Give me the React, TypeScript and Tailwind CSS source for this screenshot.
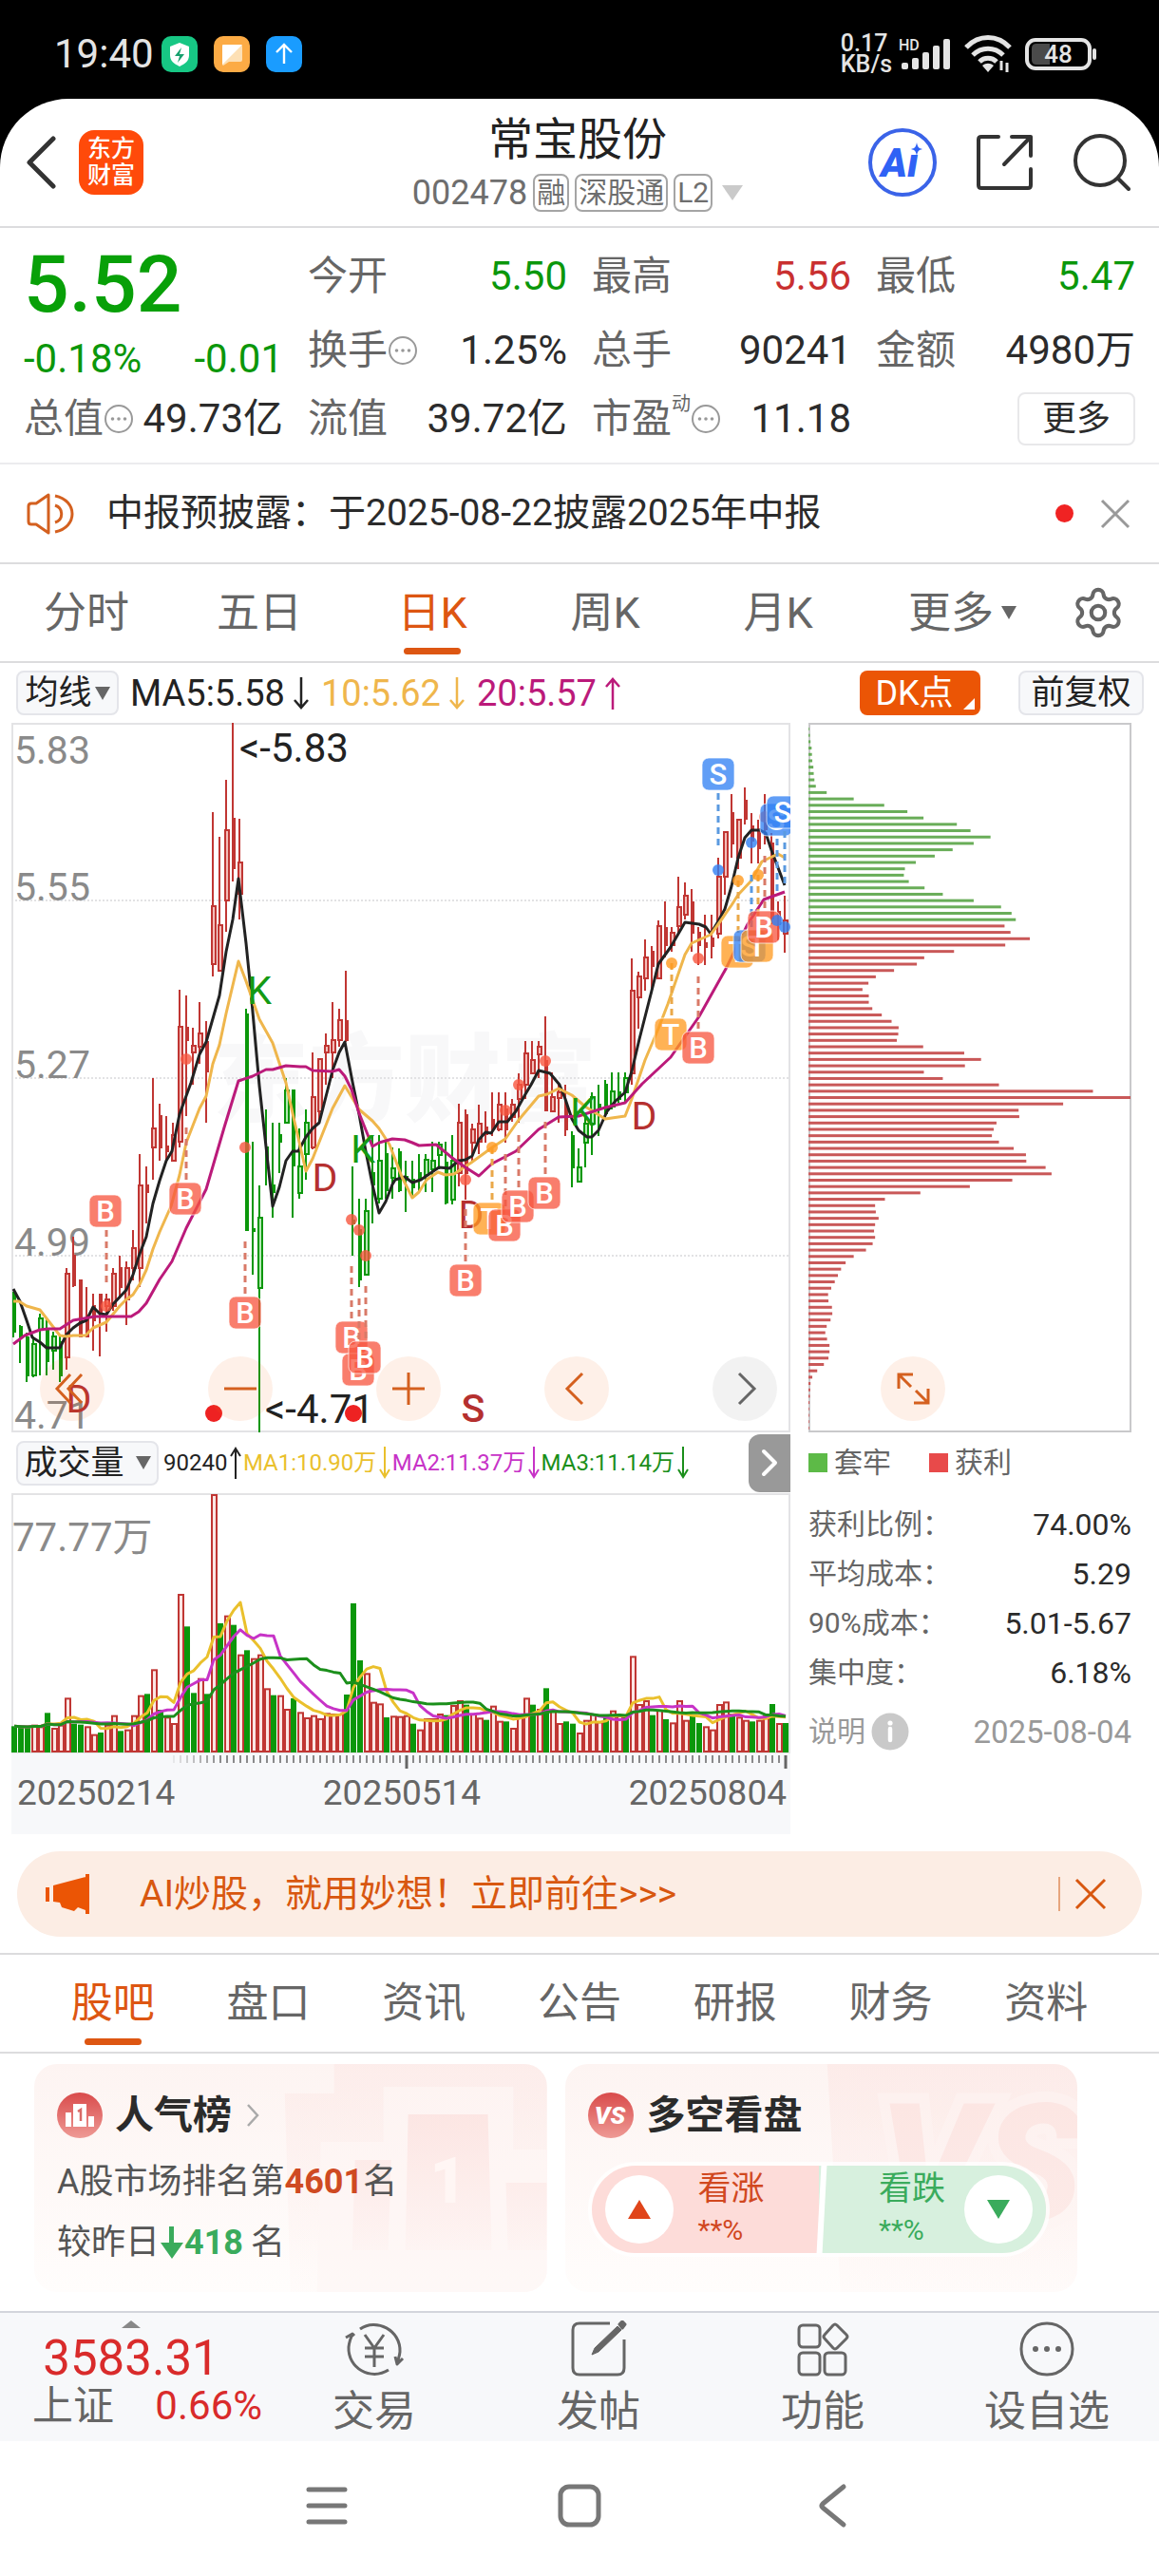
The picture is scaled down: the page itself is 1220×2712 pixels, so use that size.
import React from "react";
import { Settings } from "lucide-react";

type Kind = "r" | "R" | "g" | "G";
type Candle = [number, number, number, number, Kind];

const RED = "#c03633";
const GREEN = "#0b970b";

/* high, body top, body bottom, low, kind (lower case: hollow body) */
const CANDLES: Candle[] = [
  [599, 601, 641, 647, "G"], [634, 636, 646, 674, "G"], [642, 647, 687, 694, "G"], [646, 654, 687, 689, "g"],
  [622, 627, 639, 687, "g"], [627, 639, 672, 687, "G"], [641, 646, 661, 681, "g"], [646, 652, 687, 694, "G"],
  [574, 580, 668, 681, "r"], [541, 561, 592, 594, "R"], [587, 587, 646, 647, "R"], [594, 626, 646, 647, "R"],
  [601, 614, 629, 661, "R"], [601, 602, 621, 667, "R"], [601, 607, 614, 641, "r"], [574, 580, 614, 619, "r"],
  [561, 574, 594, 606, "R"], [567, 574, 607, 634, "r"], [534, 553, 574, 587, "r"], [454, 487, 574, 594, "r"],
  [467, 487, 494, 527, "R"], [374, 427, 447, 481, "r"], [401, 414, 447, 461, "R"], [414, 446, 451, 462, "R"],
  [421, 434, 461, 462, "r"], [281, 320, 441, 447, "r"], [287, 321, 334, 414, "R"], [321, 340, 347, 381, "r"],
  [294, 327, 341, 359, "r"], [314, 336, 367, 421, "R"], [94, 193, 254, 267, "r"], [120, 213, 261, 262, "r"],
  [60, 113, 187, 220, "r"], [0, 101, 153, 167, "R"], [101, 147, 180, 207, "r"], [301, 307, 534, 535, "G"],
  [441, 533, 535, 581, "G"], [487, 521, 595, 747, "g"], [407, 447, 459, 487, "G"], [421, 487, 494, 521, "G"],
  [421, 434, 441, 474, "G"], [374, 387, 421, 422, "g"], [387, 387, 466, 521, "G"], [427, 467, 495, 501, "g"],
  [407, 421, 454, 481, "g"], [347, 394, 447, 449, "r"], [353, 354, 409, 422, "r"], [327, 340, 347, 381, "r"],
  [294, 334, 347, 374, "r"], [301, 313, 334, 341, "r"], [261, 314, 334, 336, "R"], [467, 524, 527, 561, "G"],
  [501, 534, 586, 594, "G"], [501, 514, 581, 582, "g"], [434, 474, 486, 527, "G"], [434, 461, 501, 506, "g"],
  [441, 454, 492, 501, "G"], [447, 469, 479, 501, "g"], [448, 452, 492, 494, "G"], [461, 478, 481, 515, "G"],
  [461, 481, 489, 500, "G"], [454, 474, 481, 494, "G"], [454, 460, 476, 494, "g"], [441, 461, 470, 494, "g"],
  [441, 444, 455, 470, "g"], [441, 463, 505, 507, "G"], [434, 461, 502, 507, "g"], [401, 421, 474, 488, "r"],
  [407, 413, 474, 502, "R"], [422, 428, 442, 461, "r"], [402, 422, 441, 454, "r"], [409, 426, 433, 442, "R"],
  [389, 418, 426, 435, "R"], [389, 402, 428, 430, "r"], [389, 407, 428, 442, "R"], [396, 402, 415, 420, "r"],
  [369, 381, 396, 421, "r"], [335, 348, 381, 396, "r"], [335, 355, 369, 370, "r"], [335, 341, 349, 374, "r"],
  [309, 356, 408, 409, "R"], [368, 394, 409, 410, "r"], [381, 389, 395, 421, "r"], [381, 404, 428, 435, "R"],
  [430, 435, 468, 489, "G"], [448, 468, 483, 484, "g"], [415, 422, 442, 468, "g"], [389, 394, 422, 455, "g"],
  [381, 402, 405, 435, "G"], [376, 381, 411, 415, "G"], [368, 388, 404, 407, "g"], [368, 389, 396, 400, "G"],
  [368, 374, 389, 401, "g"], [248, 282, 369, 381, "r"], [262, 267, 289, 322, "r"], [228, 247, 269, 282, "r"],
  [235, 241, 256, 282, "R"], [208, 214, 269, 270, "r"], [188, 216, 234, 247, "R"], [215, 221, 234, 241, "r"],
  [162, 194, 214, 222, "r"], [168, 182, 202, 207, "r"], [175, 189, 221, 241, "R"], [215, 221, 234, 255, "R"],
  [202, 232, 236, 255, "R"], [202, 227, 235, 248, "R"], [142, 162, 222, 227, "r"], [114, 115, 162, 181, "r"],
  [75, 95, 127, 142, "R"], [101, 102, 142, 154, "r"], [68, 82, 101, 107, "R"], [95, 109, 124, 148, "R"],
  [102, 112, 132, 148, "R"], [75, 99, 112, 128, "R"], [116, 127, 206, 212, "R"], [188, 199, 212, 229, "R"],
  [182, 208, 222, 242, "r"],
];

const MA5 =
  "2,596 9,609 16,629 22,647 30,652 37,658 51,658 58,644 65,637 72,632 79,629 86,615 93,622 100,623 107,612 121,597 128,581 135,559 142,541 149,506 156,482 163,461 169,451 177,412 189,379 198,349 205,336 219,287 226,241 233,207 239,164 247,232 252,282 261,382 268,446 275,509 282,489 289,461 296,451 302,451 310,436 317,427 324,421 334,382 338,366 345,347 351,336 359,378 366,412 373,451 380,486 387,516 394,504 401,486 404,481 414,478 422,484 431,481 450,468 461,469 471,461 478,460 485,456 492,439 499,431 505,432 513,420 522,420 531,409 541,391 547,381 555,366 567,369 577,381 583,396 590,417 597,429 606,436 611,436 618,429 627,409 636,398 646,389 653,367 661,333 674,282 681,254 694,236 709,210 724,212 731,215 736,222 744,209 751,196 758,172 765,142 772,121 779,113 788,113 794,116 800,134 814,171";
const MA10 =
  "2,609 8,609 16,614 30,618 37,627 51,645 58,646 65,645 78,645 86,637 100,631 114,614 121,607 128,602 135,591 142,576 149,554 156,536 168,509 177,476 184,442 198,406 205,393 212,359 219,339 226,306 239,251 247,272 261,312 275,337 289,379 296,411 310,472 317,459 338,406 351,382 366,407 380,419 387,427 398,444 411,478 422,500 429,494 437,481 449,473 457,476 466,475 484,463 506,447 520,438 534,418 555,393 564,391 576,385 590,392 604,404 625,417 646,414 653,396 667,355 681,322 691,296 709,244 716,232 736,223 744,212 758,192 765,181 779,166 790,146 807,138 814,142";
const MA20 =
  "2,654 14,645 30,639 38,638 51,638 65,629 88,625 126,625 134,620 142,611 156,586 169,567 184,532 205,491 224,426 239,377 254,372 268,365 275,365 289,361 304,362 310,362 317,366 338,367 345,365 351,372 358,386 366,411 380,446 387,442 401,438 414,439 422,442 429,445 447,444 464,458 478,468 492,477 506,464 531,451 555,428 576,415 597,414 625,405 646,400 664,380 694,352 724,309 752,259 775,212 792,186 814,178";

type Marker = { t: "B" | "T" | "S"; x: number; y: number; dx: number; dy: number };
const MARKERS: Marker[] = [
  { t: "B", x: 99, y: 514, dx: 100, dy: 614 },
  { t: "B", x: 183, y: 501, dx: 184, dy: 354 },
  { t: "B", x: 246, y: 621, dx: 246, dy: 447 },
  { t: "B", x: 358, y: 647, dx: 358, dy: 523 },
  { t: "B", x: 365, y: 681, dx: 366, dy: 534 },
  { t: "B", x: 372, y: 668, dx: 373, dy: 561 },
  { t: "B", x: 478, y: 587, dx: 478, dy: 481 },
  { t: "T", x: 503, y: 522, dx: 506, dy: 447 },
  { t: "B", x: 519, y: 529, dx: 520, dy: 408 },
  { t: "B", x: 533, y: 509, dx: 534, dy: 381 },
  { t: "B", x: 561, y: 495, dx: 562, dy: 356 },
  { t: "T", x: 694, y: 328, dx: 695, dy: 253 },
  { t: "B", x: 723, y: 342, dx: 723, dy: 248 },
  { t: "S", x: 744, y: 54, dx: 744, dy: 155 },
  { t: "T", x: 764, y: 241, dx: 765, dy: 166 },
  { t: "S", x: 777, y: 235, dx: 779, dy: 126 },
  { t: "T", x: 785, y: 235, dx: 786, dy: 160 },
  { t: "B", x: 792, y: 215, dx: 793, dy: 99 },
  { t: "S", x: 805, y: 102, dx: 806, dy: 208 },
  { t: "S", x: 812, y: 94, dx: 814, dy: 215 },
];
const MARK_FILL = { B: "#f7563f", T: "#ff9a1f", S: "#2f80f3" };
const MARK_DASH = { B: "#d97a68", T: "#eaa849", S: "#5b9ae0" };

const VOLUMES: [number, "r" | "G"][] = [
  [80, "G"], [78, "G"], [75, "G"], [85, "r"], [80, "r"], [122, "G"], [75, "r"], [85, "r"], [170, "r"], [88, "G"],
  [85, "G"], [80, "r"], [55, "r"], [60, "G"], [85, "r"], [115, "r"], [65, "G"], [70, "r"], [115, "r"], [178, "r"],
  [182, "G"], [260, "r"], [132, "G"], [110, "r"], [90, "r"], [498, "r"], [395, "G"], [185, "G"], [232, "r"], [182, "G"],
  [813, "r"], [405, "G"], [430, "r"], [400, "G"], [307, "r"], [320, "G"], [295, "r"], [307, "r"], [200, "r"], [178, "G"],
  [178, "r"], [135, "r"], [168, "G"], [125, "r"], [108, "r"], [115, "r"], [105, "r"], [122, "r"], [120, "r"], [120, "r"],
  [180, "G"], [468, "G"], [288, "G"], [248, "r"], [157, "r"], [152, "r"], [108, "G"], [113, "r"], [112, "r"], [115, "r"],
  [88, "G"], [70, "r"], [105, "r"], [105, "r"], [120, "r"], [115, "G"], [147, "r"], [162, "r"], [148, "G"], [120, "r"],
  [107, "r"], [100, "G"], [145, "r"], [97, "r"], [95, "G"], [75, "r"], [115, "r"], [170, "r"], [148, "G"], [135, "r"],
  [200, "G"], [132, "r"], [90, "r"], [95, "G"], [88, "G"], [60, "r"], [100, "r"], [120, "r"], [95, "r"], [110, "G"],
  [130, "r"], [115, "r"], [110, "G"], [302, "r"], [150, "r"], [162, "r"], [115, "G"], [132, "r"], [102, "G"], [92, "r"],
  [162, "r"], [100, "r"], [115, "G"], [90, "G"], [80, "r"], [70, "r"], [150, "r"], [158, "r"], [120, "G"], [110, "r"],
  [100, "r"], [95, "G"], [100, "r"], [115, "r"], [150, "G"], [90, "r"], [90, "G"],
];

const CHIPS_TRAPPED = [
  2, 4, 6, 9, 10, 11, 14, 15, 17, 21, 52, 129, 216, 282, 328, 423, 462, 519, 471, 411, 360, 306, 275, 272, 286, 331,
  383, 471, 549, 579, 591,
];
const CHIPS_PROFIT = [
  559, 576, 631, 561, 415, 330, 309, 244, 192, 171, 154, 172, 172, 182, 209, 237, 257, 256, 252, 327, 444, 492, 446,
  329, 383, 543, 811, 918, 726, 599, 601, 536, 528, 523, 543, 585, 620, 621, 676, 693, 581, 460, 319, 218, 190, 192,
  200, 190, 187, 190, 183, 164, 129, 106, 93, 84, 75, 65, 56, 57, 67, 68, 63, 52, 48, 53, 60, 60, 57, 44, 25, 11, 6, 5,
  4, 3, 2, 2, 2, 2,
];

const barX = (i: number) => 3 + i * 7;

function average(days: number) {
  return VOLUMES.map((_, i) => {
    const part = VOLUMES.slice(Math.max(0, i - days + 1), i + 1);
    const mean = part.reduce((s, v) => s + v[0], 0) / part.length;
    return `${barX(i)},${(272 - mean / 3).toFixed(1)}`;
  }).join(" ");
}

function PriceChart() {
  return (
    <svg viewBox="0 0 820 747" className="block h-auto w-full" role="img" aria-label="日K线图">
      <rect x="1" y="1" width="818" height="745" fill="#fff" stroke="#e3e3e5" strokeWidth="2" />
      <text x="212" y="412" fontSize="101" fontWeight="900" fill="#f8f8f9">东方财富</text>
      {[187, 374, 561].map((y) => (
        <line key={y} x1="0" x2="820" y1={y} y2={y} stroke="#e2e2e4" strokeWidth="2" strokeDasharray="2 2" />
      ))}
      <g fontSize="41" fill="#8a8a8a">
        <text x="3" y="43">5.83</text>
        <text x="3" y="187">5.55</text>
        <text x="3" y="374">5.27</text>
        <text x="3" y="561">4.99</text>
        <text x="3" y="743">4.71</text>
      </g>
      {CANDLES.map(([hi, top, bot, lo, k], i) => {
        const x = barX(i);
        const c = k === "r" || k === "R" ? RED : GREEN;
        const hollow = k === "r" || k === "g";
        return (
          <g key={i} stroke={c} strokeWidth="2">
            <line x1={x - 1} x2={x - 1} y1={hi} y2={hollow ? top : lo} />
            {hollow && <line x1={x - 1} x2={x - 1} y1={bot} y2={lo} />}
            {hollow ? (
              <rect x={x - 2} y={top} width="4" height={Math.max(2, bot - top)} fill={k === "r" ? "#f3bdb9" : "#b5eab5"} />
            ) : (
              <rect x={x - 1} y={top} width="2" height={Math.max(2, bot - top)} fill={c} />
            )}
          </g>
        );
      })}
      <g fill="none" strokeWidth="3" strokeLinejoin="round">
        <polyline points={MA5} stroke="#222" />
        <polyline points={MA10} stroke="#efb64c" />
        <polyline points={MA20} stroke="#bb1a7a" />
      </g>
      <g fontSize="42" fill="#222">
        <text x="240" y="41">&lt;-5.83</text>
        <text x="267" y="737">&lt;-4.71</text>
      </g>
      <g fontSize="41" textAnchor="middle">
        <g fill="#149a14">
          <text x="261" y="296">K</text>
          <text x="370" y="463">K</text>
          <text x="601" y="424">K</text>
        </g>
        <g fill="#b5302f">
          <text x="330" y="493">D</text>
          <text x="71" y="726">D</text>
          <text x="484" y="532">D</text>
          <text x="666" y="428">D</text>
          <text x="486" y="736" fontWeight="500">S</text>
        </g>
      </g>
      <circle cx="213" cy="727" r="9" fill="#ee2222" />
      <circle cx="360" cy="727" r="9" fill="#ee2222" />
      {MARKERS.map((m, i) => {
        const dir = m.dy > m.y ? 1 : -1;
        const start = m.y + dir * 20;
        const end = m.t === "T" ? m.dy : start + dir * 56;
        return (
          <g key={i}>
            <line x1={m.dx} x2={m.dx} y1={start} y2={end} stroke={MARK_DASH[m.t]} strokeWidth="3" strokeDasharray="7 5" />
            <circle cx={m.dx} cy={m.dy} r="6" fill={MARK_FILL[m.t]} fillOpacity="0.8" />
            <rect x={m.x - 17} y={m.y - 17} width="34" height="34" rx="7" fill={MARK_FILL[m.t]} fillOpacity="0.76" stroke="#fff" strokeOpacity="0.7" strokeWidth="1" />
            <text x={m.x} y={m.y + 11} textAnchor="middle" fontSize="31" fontWeight="500" fill="#fff">{m.t}</text>
          </g>
        );
      })}
    </svg>
  );
}

function VolumeChart() {
  return (
    <svg viewBox="0 0 820 274" className="block h-auto w-full" role="img" aria-label="成交量图">
      <rect x="1" y="1" width="818" height="272" fill="#fff" stroke="#e3e3e5" strokeWidth="2" />
      {VOLUMES.map(([v, k], i) => {
        const h = v / 3;
        return k === "r" ? (
          <rect key={i} x={barX(i) - 2} y={273 - h} width="5" height={h - 1} fill="#fbe6e4" stroke={RED} strokeWidth="2" />
        ) : (
          <rect key={i} x={barX(i) - 3} y={272 - h} width="6" height={h + 1} fill={GREEN} />
        );
      })}
      <g fill="none" strokeWidth="3" strokeLinejoin="round">
        <polyline points={average(5)} stroke="#eac02c" />
        <polyline points={average(10)} stroke="#c733c7" />
        <polyline points={average(20)} stroke="#1b8f1b" />
      </g>
      <text x="1" y="61" fontSize="42" fill="#8a8a8a">77.77万</text>
    </svg>
  );
}

function ChipChart() {
  return (
    <svg viewBox="0 0 340 747" className="block h-auto w-full" role="img" aria-label="筹码分布">
      <rect x="1" y="1" width="338" height="745" fill="#fff" stroke="#c9c9cb" strokeWidth="2" />
      {[...CHIPS_TRAPPED, ...CHIPS_PROFIT].map((v, i) => (
        <rect key={i} x="0" y={5 + i * 6.69} width={(v / 918) * 339} height="3" fill={i < CHIPS_TRAPPED.length ? "#69ad58" : "#c95858"} />
      ))}
    </svg>
  );
}

function RoundButton({ label, gray, children }: { label: string; gray?: boolean; children: React.ReactNode }) {
  return (
    <button
      type="button"
      aria-label={label}
      className={`flex size-[68px] items-center justify-center rounded-full ${gray ? "bg-black/5 text-[#666]" : "bg-[#f76b1c]/10 text-[#d4601f]"}`}
    >
      <svg viewBox="0 0 40 40" className="size-10" fill="none" stroke="currentColor" strokeWidth="3">
        {children}
      </svg>
    </button>
  );
}

function Dots() {
  return (
    <svg viewBox="0 0 32 32" className="size-8 shrink-0" fill="none" stroke="#999" strokeWidth="2">
      <circle cx="16" cy="16" r="14" />
      <g fill="#999" stroke="none">
        <circle cx="9.5" cy="16" r="1.8" />
        <circle cx="16" cy="16" r="1.8" />
        <circle cx="22.5" cy="16" r="1.8" />
      </g>
    </svg>
  );
}

function Stat({ label, value, tone = "text-[#2b2b2b]", dots, sup }: { label: string; value: string; tone?: string; dots?: boolean; sup?: string }) {
  return (
    <div className="flex h-[75px] items-center justify-between whitespace-nowrap">
      <dt className="flex items-center text-[#666]">
        {label}
        {sup && <span className="-mt-8 text-xl leading-5">{sup}</span>}
        {dots && <Dots />}
      </dt>
      <dd className={tone}>{value}</dd>
    </div>
  );
}

function Arrow({ up }: { up?: boolean }) {
  return (
    <svg viewBox="0 0 18 34" className="h-[34px] w-[18px]" fill="none" stroke="currentColor" strokeWidth="2.5">
      {up ? <path d="M9 34V2M2 10l7-8 7 8" /> : <path d="M9 0v32M2 24l7 8 7-8" />}
    </svg>
  );
}

function SmallArrow({ up }: { up?: boolean }) {
  return (
    <svg viewBox="0 0 14 34" className="h-[34px] w-[14px]" fill="none" stroke="currentColor" strokeWidth="2">
      {up ? <path d="M7 34V2M2 10l5-8 5 8" /> : <path d="M7 0v32M2 24l5 8 5-8" />}
    </svg>
  );
}

function Triangle() {
  return (
    <svg viewBox="0 0 16 14" className="h-[14px] w-4 shrink-0">
      <path d="M0 0h16L8 14z" fill="#666" />
    </svg>
  );
}

function StatusBar() {
  return (
    <div className="flex h-[104px] items-center justify-between pt-[10px] pr-[65px] pl-[57px] text-[#e4e4e4]">
      <div className="flex items-center">
        <span className="text-[42px] leading-none">19:40</span>
        <svg viewBox="0 0 38 38" className="ml-2 size-[38px]">
          <rect width="38" height="38" rx="10" fill="#17c784" />
          <path d="M19 7l10 4v9c0 6-4 9-10 12-6-3-10-6-10-12v-9z" fill="#fff" />
          <path d="M21 12l-7 9h5l-2 7 7-9h-5z" fill="#17a06e" />
        </svg>
        <svg viewBox="0 0 38 38" className="ml-[17px] size-[38px]">
          <rect width="38" height="38" rx="10" fill="#fcab45" />
          <path d="M10 9h18q2 0 2 2v14q0 2-2 2H16l-6 4q-1 0-1-2V11q0-2 1-2z" fill="#fde0b5" />
          <path d="M10 9h20L9 30V11q0-2 1-2z" fill="#fff" />
        </svg>
        <svg viewBox="0 0 38 38" className="ml-[17px] size-[38px]" fill="none">
          <rect width="38" height="38" rx="10" fill="#1a9cff" />
          <path d="M19 29V10M11 17l8-8 8 8" stroke="#fff" strokeWidth="2.4" />
        </svg>
      </div>
      <div className="flex items-center">
        <div className="mr-[7px] text-[25px] leading-[22px] font-medium">
          <div>0.17</div>
          <div>KB/s</div>
        </div>
        <svg viewBox="0 0 56 38" className="h-[38px] w-14" fill="#e4e4e4">
          <text x="0" y="15" fontSize="16" fontWeight="500">HD</text>
          <rect x="3" y="28" width="7" height="7" rx="2" />
          <rect x="14" y="23" width="7" height="12" rx="2" />
          <rect x="25" y="17" width="7" height="18" rx="2" />
          <rect x="36" y="10" width="7" height="25" rx="2" />
          <rect x="47" y="3" width="7" height="32" rx="2" />
        </svg>
        <svg viewBox="0 0 52 40" className="ml-3 h-10 w-[52px]" fill="none" stroke="#e4e4e4" strokeWidth="5">
          <path d="M3 13C16-1 36-1 49 13" />
          <path d="M10 21c9-9 23-9 32 0" />
          <path d="M17 28c5-5 13-5 18 0" />
          <path d="M20 32l6 7 6-7c-4-3-8-3-12 0z" fill="#e4e4e4" stroke="none" />
          <path d="M40 27v10M46 29v10" strokeWidth="3" />
        </svg>
        <svg viewBox="0 0 76 34" className="ml-[13px] h-[34px] w-[76px]">
          <rect x="2" y="2" width="66" height="30" rx="9" fill="none" stroke="#e4e4e4" strokeWidth="4" />
          <path d="M12 6h14v22H12q-5 0-5-5V11q0-5 5-5z" fill="#4a4a4a" />
          <rect x="71" y="11" width="4" height="12" rx="2" fill="#e4e4e4" />
          <text x="35" y="26" textAnchor="middle" fontSize="26" fontWeight="500" fill="#e4e4e4">48</text>
        </svg>
      </div>
    </div>
  );
}

function Header() {
  return (
    <header className="grid h-[136px] grid-cols-[1fr_auto_1fr] items-center border-b-2 border-[#dcdcde] pr-[30px] pl-[26px]">
      <div className="flex items-center">
        <button type="button" aria-label="返回" className="text-[#333]">
          <svg viewBox="0 0 34 56" className="h-14 w-[34px]" fill="none" stroke="currentColor" strokeWidth="5" strokeLinecap="round" strokeLinejoin="round">
            <path d="M30 3L5 28l25 25" />
          </svg>
        </button>
        <a href="#home" aria-label="东方财富" className="ml-[23px] flex size-[68px] flex-col items-center justify-center rounded-[16px] bg-[#ff4a0a] text-[25px] leading-7 font-medium text-white">
          <span>东方</span>
          <span>财富</span>
        </a>
      </div>
      <div className="flex flex-col items-center">
        <h1 className="text-[47px] leading-[56px] text-[#222]">常宝股份</h1>
        <div className="mt-[8px] flex items-center gap-[6px] text-[#6e6e6e]">
          <span className="text-[36px] leading-none">002478</span>
          {["融", "深股通", "L2"].map((t) => (
            <span key={t} className="flex h-10 items-center rounded-lg border-2 border-[#a5a5a5] px-[2px] text-[30px] leading-none">{t}</span>
          ))}
          <svg viewBox="0 0 22 16" className="ml-1 h-4 w-[22px]">
            <path d="M0 0h22L11 16z" fill="#cacaca" />
          </svg>
        </div>
      </div>
      <div className="flex items-center justify-end">
        <button type="button" aria-label="AI 助手">
          <svg viewBox="0 0 74 74" className="size-[74px]">
            <circle cx="37" cy="37" r="34" fill="none" stroke="#3a63e8" strokeWidth="4" />
            <text x="34" y="52" textAnchor="middle" fontSize="42" fontWeight="900" fontStyle="italic" fill="#2f62f5">Aı</text>
            <path d="M52 16c1 5 2 6 6 7-4 1-5 2-6 7-1-5-2-6-6-7 4-1 5-2 6-7z" fill="#2f62f5" />
          </svg>
        </button>
        <button type="button" aria-label="分享" className="ml-[41px]">
          <svg viewBox="0 0 60 60" className="size-[60px]" fill="none" stroke="#333" strokeWidth="4" strokeLinecap="round" strokeLinejoin="round">
            <path d="M23 3H5q-3 0-3 3v48q0 3 3 3h49q3 0 3-3V37" />
            <path d="M37 3h20v20M57 3L29 32" />
          </svg>
        </button>
        <button type="button" aria-label="搜索" className="ml-[42px]">
          <svg viewBox="0 0 60 60" className="size-[60px]" fill="none" stroke="#333" strokeWidth="4" strokeLinecap="round">
            <circle cx="28" cy="28" r="26" />
            <path d="M47 47l11 11" />
          </svg>
        </button>
      </div>
    </header>
  );
}

function Quote() {
  return (
    <section className="border-b-2 border-[#ececee] px-[25px] pt-[13px] pb-[9px] text-[42px] leading-none">
      <dl className="grid grid-cols-4 gap-x-[26px]">
        <div className="row-span-2 text-[#0b970b]">
          <dt className="flex h-[94px] items-center text-[84px] leading-none font-medium text-[#08a008]">5.52</dt>
          <dd className="flex h-[62px] items-center justify-between">
            <span>-0.18%</span>
            <span>-0.01</span>
          </dd>
        </div>
        <Stat label="今开" value="5.50" tone="text-[#0b970b]" />
        <Stat label="最高" value="5.56" tone="text-[#c93030]" />
        <Stat label="最低" value="5.47" tone="text-[#0b970b]" />
        <Stat label="换手" value="1.25%" dots />
        <Stat label="总手" value="90241" />
        <Stat label="金额" value="4980万" />
      </dl>
      <dl className="-mt-[6px] grid grid-cols-4 gap-x-[26px]">
        <Stat label="总值" value="49.73亿" dots />
        <Stat label="流值" value="39.72亿" />
        <Stat label="市盈" value="11.18" sup="动" dots />
        <div className="flex h-[75px] items-center justify-end">
          <button type="button" className="h-14 w-[124px] rounded-lg border-2 border-[#e8e8ea] text-4xl leading-none text-[#2b2b2b]">更多</button>
        </div>
      </dl>
    </section>
  );
}

function Notice() {
  return (
    <div className="flex h-[105px] items-center border-b-2 border-[#dcdcde] pr-[30px] pl-[27px] text-[39px] text-[#2b2b2b]">
      <svg viewBox="0 0 52 46" className="h-[46px] w-[52px]" fill="none" stroke="#d4601f" strokeWidth="3" strokeLinejoin="round">
        <path d="M3 15q0-3 3-3h5L24 3v40L11 34H6q-3 0-3-3z" />
        <path d="M31 14c9 3 9 15 0 18M31 4c24 5 24 33 0 38" />
      </svg>
      <p className="ml-[33px] leading-none whitespace-nowrap">中报预披露：于2025-08-22披露2025年中报</p>
      <span className="ml-auto size-[19px] rounded-full bg-[#f02323]" />
      <button type="button" aria-label="关闭公告" className="ml-[28px]">
        <svg viewBox="0 0 32 32" className="size-8" stroke="#999" strokeWidth="3">
          <path d="M2 2l28 28M30 2L2 30" />
        </svg>
      </button>
    </div>
  );
}

function PeriodTabs() {
  const tabs = ["分时", "五日", "日K", "周K", "月K", "更多"];
  return (
    <nav className="grid h-[104px] grid-cols-[182fr_182fr_182fr_182fr_182fr_206fr_104fr] items-stretch border-b-2 border-[#dcdcde] text-[45px] leading-none text-[#666]">
      {tabs.map((t) => (
        <button
          key={t}
          type="button"
          className={`relative flex items-center justify-center gap-2 whitespace-nowrap ${t === "日K" ? "text-[#dd5612]" : ""}`}
        >
          {t}
          {t === "更多" && <Triangle />}
          {t === "日K" && <span className="absolute bottom-[7px] left-1/2 h-[7px] w-[60px] -translate-x-1/2 rounded-full bg-[#dd5612]" />}
        </button>
      ))}
      <button type="button" aria-label="设置" className="flex items-center justify-center pr-6">
        <Settings className="size-[58px] shrink-0" strokeWidth={1.7} />
      </button>
    </nav>
  );
}

function MaBar() {
  return (
    <div className="flex h-[63px] items-center pr-4 pl-[17px] text-[38px] leading-none whitespace-nowrap">
      <button type="button" className="flex h-[47px] w-[108px] items-center justify-center gap-[3px] rounded-lg border-2 border-[#e4e5ea] bg-[#f7f8fa] text-[35px] text-[#222]">
        均线
        <Triangle />
      </button>
      <span className="ml-3 flex items-center gap-2 text-[#222]">MA5:5.58<Arrow /></span>
      <span className="ml-3 flex items-center gap-2 text-[#efb64c]">10:5.62<Arrow /></span>
      <span className="ml-3 flex items-center gap-2 text-[#bb1a7a]">20:5.57<Arrow up /></span>
      <button type="button" className="relative ml-auto h-[47px] w-[127px] rounded-lg bg-[#eb5505] pr-3 text-4xl text-white">
        DK点
        <svg viewBox="0 0 12 12" className="absolute right-1.5 bottom-1.5 size-3">
          <path d="M12 0v12H0z" fill="#fff" />
        </svg>
      </button>
      <button type="button" className="ml-10 h-[47px] w-[132px] rounded-lg border-2 border-[#e4e5ea] bg-[#f7f8fa] text-[35px] text-[#222]">前复权</button>
    </div>
  );
}

function VolumeBar() {
  return (
    <div className="flex h-16 items-center pl-[5px] text-2xl leading-none whitespace-nowrap">
      <button type="button" className="mr-[5px] flex h-[47px] w-[150px] shrink-0 items-center justify-center gap-3 rounded-lg border-2 border-[#e4e5ea] bg-[#f7f8fa] text-[35px] leading-none text-[#222]">
        成交量
        <Triangle />
      </button>
      <div className="flex min-w-0 flex-1 items-center justify-between pr-[62px]">
        <span className="flex items-center gap-0.5 text-[#222]">90240<SmallArrow up /></span>
        <span className="flex items-center gap-0.5 text-[#eac02c]">MA1:10.90万<SmallArrow /></span>
        <span className="flex items-center gap-0.5 text-[#c733c7]">MA2:11.37万<SmallArrow /></span>
        <span className="flex items-center gap-0.5 text-[#1b8f1b]">MA3:11.14万<SmallArrow /></span>
      </div>
      <button type="button" aria-label="展开" className="flex h-[61px] w-[44px] shrink-0 items-center justify-center rounded-l-[12px] bg-[#999]">
        <svg viewBox="0 0 18 30" className="h-[30px] w-[18px]" fill="none" stroke="#fff" strokeWidth="4" strokeLinecap="round" strokeLinejoin="round">
          <path d="M3 3l12 12L3 27" />
        </svg>
      </button>
    </div>
  );
}

function DateAxis() {
  return (
    <div className="h-[85px] bg-[#f7f8fa]">
      <svg viewBox="0 0 820 16" className="block h-auto w-full" stroke="#666" strokeWidth="2">
        {Array.from({ length: 93 }, (_, n) => {
          const x = 171 + n * 7;
          const major = n === 35 || n === 92;
          return <line key={n} x1={x} x2={x} y1="2" y2={major ? 16 : 10} strokeWidth={major ? 3 : 1.5} opacity={Math.min(1, 0.15 + n * 0.12)} />;
        })}
      </svg>
      <div className="flex justify-between pt-1.5 pr-1 pl-1.5 text-[37px] leading-10 text-[#666]">
        <span>20250214</span>
        <span>20250514</span>
        <span>20250804</span>
      </div>
    </div>
  );
}

function ChipInfo() {
  const rows = [
    ["获利比例：", "74.00%"],
    ["平均成本：", "5.29"],
    ["90%成本：", "5.01-5.67"],
    ["集中度：", "6.18%"],
  ];
  return (
    <div className="text-[30px] leading-none text-[#666]">
      <div className="flex h-16 items-center">
        <span className="size-5 bg-[#5dba47]" />
        <span className="ml-[7px]">套牢</span>
        <span className="ml-10 size-5 bg-[#e84a4a]" />
        <span className="ml-[7px]">获利</span>
      </div>
      <dl className="pt-[7px]">
        {rows.map(([k, v]) => (
          <div key={k} className="flex h-[52px] items-center justify-between whitespace-nowrap">
            <dt>{k}</dt>
            <dd className="text-[32px] text-[#2b2b2b]">{v}</dd>
          </div>
        ))}
      </dl>
      <div className="flex h-[72px] items-center whitespace-nowrap text-[#999]">
        <span>说明</span>
        <svg viewBox="0 0 40 40" className="ml-1.5 size-10">
          <circle cx="20" cy="20" r="19.5" fill="#c9c9c9" />
          <circle cx="20" cy="11" r="2.6" fill="#fff" />
          <path d="M20 17v12" stroke="#fff" strokeWidth="4.5" strokeLinecap="round" />
        </svg>
        <span className="ml-auto text-[33px]">2025-08-04</span>
      </div>
    </div>
  );
}

function Charts() {
  return (
    <section className="grid grid-cols-[820fr_340fr] gap-x-[19px] pr-[29px] pl-3">
      <div className="min-w-0">
        <div className="relative">
          <PriceChart />
          <div className="absolute inset-x-0 bottom-3 flex justify-between pr-[14px] pl-[30px]">
            <RoundButton label="向左快进"><path d="M18 5L4 20l14 15M30 5L16 20l14 15" /></RoundButton>
            <RoundButton label="缩小"><path d="M3 20h34" /></RoundButton>
            <RoundButton label="放大"><path d="M3 20h34M20 3v34" /></RoundButton>
            <RoundButton label="向左"><path d="M26 4L10 20l16 16" /></RoundButton>
            <RoundButton label="向右" gray><path d="M14 4l16 16-16 16" /></RoundButton>
          </div>
        </div>
        <VolumeBar />
        <VolumeChart />
        <DateAxis />
      </div>
      <div className="min-w-0">
        <div className="relative">
          <ChipChart />
          <div className="absolute bottom-3 left-[76px]">
            <RoundButton label="全屏"><path d="M5 20V5h15M5 5l13 13M36 20v15H21M36 35L23 22" /></RoundButton>
          </div>
        </div>
        <ChipInfo />
      </div>
    </section>
  );
}

function Banner() {
  return (
    <div className="mx-[18px] mt-[18px] mb-[17px] flex h-[90px] items-center rounded-full bg-[#fcede4] pr-[36px] pl-[30px] text-[#d8570f]">
      <svg viewBox="0 0 46 42" className="h-[42px] w-[46px]" fill="#eb5505">
        <path d="M0 14h4v15H0zM8 12L42 3v35l-8-3-4 4-13-4-2-5-7-1zM42 0h4v42h-4z" />
      </svg>
      <a href="#ai" className="ml-[53px] text-[39px] leading-none whitespace-nowrap">AI炒股，就用妙想！立即前往&gt;&gt;&gt;</a>
      <span className="ml-auto h-9 w-0.5 bg-[#e6a57d]" />
      <button type="button" aria-label="关闭推广" className="ml-[14px]">
        <svg viewBox="0 0 36 34" className="h-[34px] w-9" stroke="#d8570f" strokeWidth="3">
          <path d="M3 2l30 30M33 2L3 32" />
        </svg>
      </button>
    </div>
  );
}

function SectionTabs() {
  const tabs = ["股吧", "盘口", "资讯", "公告", "研报", "财务", "资料"];
  return (
    <nav className="flex h-[106px] items-stretch border-y-2 border-[#dcdcde] px-[37px] text-[44px] leading-none text-[#666]">
      {tabs.map((t, i) => (
        <button key={t} type="button" className={`relative flex-1 whitespace-nowrap ${i === 0 ? "text-[#dd5612]" : ""}`}>
          {t}
          {i === 0 && <span className="absolute bottom-[7px] left-1/2 h-[7px] w-[60px] -translate-x-1/2 rounded-full bg-[#dd5612]" />}
        </button>
      ))}
    </nav>
  );
}

function Cards() {
  return (
    <section className="mt-[11px] grid grid-cols-2 gap-[19px] pr-[86px] pl-9">
      <div className="relative h-60 overflow-hidden rounded-[24px] bg-linear-to-b from-[#fdf4f2] to-[#fffdfc] pl-6 text-[#555]">
        <svg viewBox="0 0 540 240" className="absolute inset-0 size-full">
          <defs>
            <linearGradient id="fade" x1="0" y1="0" x2="0" y2="1">
              <stop offset="0" stopColor="#fbdcd9" stopOpacity="0.6" />
              <stop offset="1" stopColor="#fbdcd9" stopOpacity="0.1" />
            </linearGradient>
          </defs>
          <path d="M264 31h52V0h224v240H270z" fill="url(#fade)" opacity="0.5" />
          <path d="M302 82h66V24h137v66h35v150H298z" fill="#fef7f5" opacity="0.7" />
          <path d="M394 53h84l4 143h-91zM338 101h38l-3 95h-38zM497 125h43v71h-41z" fill="url(#fade)" />
          <text x="436" y="146" textAnchor="middle" fontSize="66" fontWeight="900" fill="#fff6f4">1</text>
        </svg>
        <div className="relative pt-[26px]">
          <a href="#rank" className="flex h-14 items-center text-[41px] leading-none font-bold text-[#2b2b2b]">
            <svg viewBox="0 0 48 48" className="mr-[13px] size-12">
              <defs>
                <linearGradient id="disc" x1="0" y1="0" x2="0" y2="1">
                  <stop offset="0" stopColor="#d94b4b" />
                  <stop offset="1" stopColor="#ee9a95" />
                </linearGradient>
              </defs>
              <circle cx="24" cy="24" r="24" fill="url(#disc)" />
              <path d="M9 21h6v15H9zM17 12h14v24H17zM33 25h6v11h-6z" fill="#fff" />
              <path d="M22 20l3-2v12" fill="none" stroke="#d96a66" strokeWidth="2.5" />
            </svg>
            人气榜
            <svg viewBox="0 0 14 24" className="ml-[15px] h-6 w-[14px]" fill="none" stroke="#aaa" strokeWidth="2.5">
              <path d="M2 1l10 11L2 23" />
            </svg>
          </a>
          <p className="mt-[10px] flex h-16 items-center text-4xl leading-none whitespace-nowrap">
            A股市场排名第<b className="font-bold text-[#cf4a22]">4601</b>名
          </p>
          <p className="flex h-16 items-center text-4xl leading-none whitespace-nowrap">
            较昨日
            <svg viewBox="0 0 26 34" className="h-[34px] w-[26px]" fill="#3aab5c">
              <path d="M10 0h5v17h10L13 34 1 17h9z" />
            </svg>
            <b className="mr-2 font-bold text-[#3aab5c]">418</b>名
          </p>
        </div>
      </div>
      <div className="relative h-60 overflow-hidden rounded-[24px] bg-linear-to-b from-[#fdf4f2] to-[#fffdfc] pr-[29px] pl-6">
        <svg viewBox="0 0 540 240" className="absolute inset-0 size-full">
          <path d="M276 0h264v240H290z" fill="url(#fade)" opacity="0.6" />
          <text x="438" y="164" textAnchor="middle" fontSize="172" fontWeight="900" fontStyle="italic" fill="#fbe0dd" stroke="#fef5f3" strokeWidth="22" paintOrder="stroke" opacity="0.55">VS</text>
        </svg>
        <div className="relative pt-[26px]">
          <h2 className="flex h-14 items-center text-[41px] leading-none font-bold text-[#2b2b2b]">
            <svg viewBox="0 0 48 48" className="mr-[14px] size-12">
              <circle cx="24" cy="24" r="24" fill="url(#disc)" />
              <text x="23" y="33" textAnchor="middle" fontSize="26" fontWeight="900" fontStyle="italic" fill="#fff">VS</text>
            </svg>
            多空看盘
          </h2>
          <div className="relative mt-[21px] flex h-[100px] overflow-hidden rounded-full border-4 border-white/80 text-[35px] leading-[42px] whitespace-nowrap">
            <button type="button" className="flex flex-1 items-center bg-[#fddcd9] pl-[14px] text-left text-[#d1481f]">
              <span className="flex size-[72px] items-center justify-center rounded-full bg-white">
                <svg viewBox="0 0 24 20" className="h-5 w-6"><path d="M12 0l12 20H0z" fill="#e0451a" /></svg>
              </span>
              <span className="ml-[26px]">看涨<br /><span className="text-[30px]">**%</span></span>
            </button>
            <span className="absolute inset-y-0 left-1/2 w-1.5 -skew-x-3 bg-white" />
            <button type="button" className="flex flex-1 items-center justify-end bg-[#d7f0de] pr-[14px] text-left text-[#3aab5c]">
              <span className="mr-5">看跌<br /><span className="text-[30px]">**%</span></span>
              <span className="flex size-[72px] items-center justify-center rounded-full bg-white">
                <svg viewBox="0 0 24 20" className="h-5 w-6"><path d="M0 0h24L12 20z" fill="#3aab5c" /></svg>
              </span>
            </button>
          </div>
        </div>
      </div>
    </section>
  );
}

function NavItem({ label, children }: { label: string; children: React.ReactNode }) {
  return (
    <button type="button" className="flex flex-col items-center pt-[8px] text-[44px] leading-none whitespace-nowrap text-[#666]">
      <svg viewBox="0 0 64 60" className="h-[60px] w-16" fill="none" stroke="#666" strokeWidth="3" strokeLinejoin="round">
        {children}
      </svg>
      <span className="mt-[14px]">{label}</span>
    </button>
  );
}

function BottomBar() {
  return (
    <footer className="mt-[20px] grid h-[137px] grid-cols-[276fr_236fr_236fr_236fr_236fr] border-t-2 border-[#d3d5dc] bg-[#f7f8fa]">
      <a href="#index" className="flex flex-col items-center whitespace-nowrap text-[#d92b2b]">
        <svg viewBox="0 0 20 8" className="mt-2 h-2 w-5"><path d="M10 0l10 8H0z" fill="#888" /></svg>
        <span className="mt-[8px] text-[51px] leading-[48px]">3583.31</span>
        <span className="flex w-full items-center justify-between pl-[34px] leading-[52px]">
          <span className="text-[43px] text-[#666]">上证</span>
          <span className="text-[42px]">0.66%</span>
        </span>
      </a>
      <NavItem label="交易">
        <path d="M17 9C34-3 60 10 59 33q-1 8-4 12M47 52C28 64 4 50 5 28q1-8 4-13M2 18l7-4 2 2M62 40l-6 6-2-8" />
        <path d="M22 15l10 14 10-14M32 29v20M22 29h20M22 38h20" />
      </NavItem>
      <NavItem label="发帖">
        <path d="M44 3H12q-7 0-7 7v40q0 7 7 7h40q7 0 7-7V20" />
        <path d="M25 36l3-7 24-23 4 4-24 23z" fill="#666" strokeWidth="1" />
        <path d="M54 4l3-3 3 3-3 4z" fill="#666" />
      </NavItem>
      <NavItem label="功能">
        <rect x="7" y="5" width="22" height="23" rx="4" />
        <rect x="7" y="34" width="22" height="23" rx="4" />
        <rect x="34" y="34" width="22" height="23" rx="4" />
        <path d="M43 5q2-2 4 0l10 10q2 2 0 4L47 29q-2 2-4 0L34 19q-2-2 0-4z" />
      </NavItem>
      <NavItem label="设自选">
        <circle cx="32" cy="30" r="27" />
        <g fill="#666" stroke="none">
          <circle cx="20" cy="30" r="3" />
          <circle cx="32" cy="30" r="3" />
          <circle cx="44" cy="30" r="3" />
        </g>
      </NavItem>
    </footer>
  );
}

function SystemNav() {
  return (
    <div className="flex h-[142px] items-center justify-center gap-[218px] bg-white pb-1.5">
      <button type="button" aria-label="最近任务">
        <svg viewBox="0 0 48 48" className="size-12" stroke="#777" strokeWidth="5" strokeLinecap="round"><path d="M5 7h38M5 24h38M5 41h38" /></svg>
      </button>
      <button type="button" aria-label="主屏幕">
        <svg viewBox="0 0 48 48" className="size-12" fill="none" stroke="#777" strokeWidth="5"><rect x="4" y="4" width="40" height="40" rx="9" /></svg>
      </button>
      <button type="button" aria-label="返回上一页">
        <svg viewBox="0 0 48 48" className="size-12" fill="none" stroke="#777" strokeWidth="5" strokeLinecap="round" strokeLinejoin="round"><path d="M36 4L14 22q-2 2 0 4l22 18" /></svg>
      </button>
    </div>
  );
}

export default function App() {
  return (
    <div className="bg-black font-['Roboto','Noto_Sans_CJK_SC',sans-serif]">
      <StatusBar />
      <main className="rounded-t-[72px] bg-white">
        <Header />
        <Quote />
        <Notice />
        <PeriodTabs />
        <MaBar />
        <Charts />
        <Banner />
        <SectionTabs />
        <Cards />
        <BottomBar />
        <SystemNav />
      </main>
    </div>
  );
}
